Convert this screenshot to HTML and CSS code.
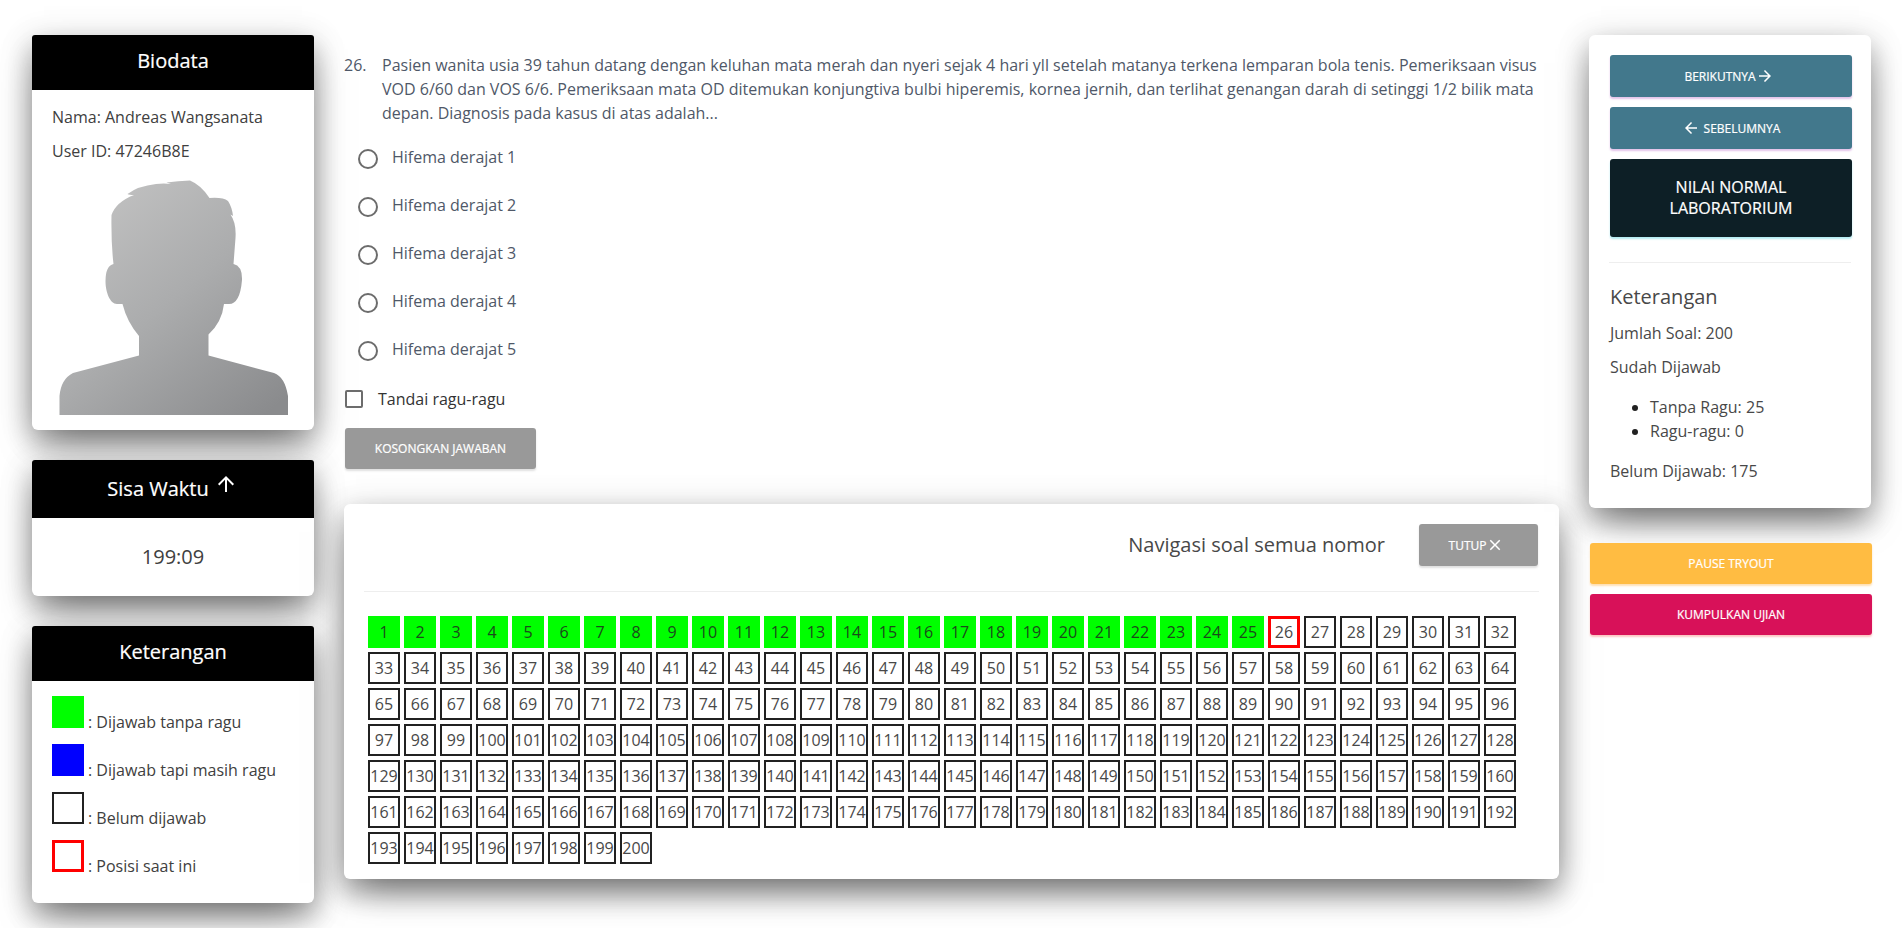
FILE: index.html
```html
<!DOCTYPE html>
<html lang="id">
<head>
<meta charset="utf-8">
<title>Tryout</title>
<link rel="stylesheet" href="styles.css">
</head>
<body>
<div class="layout">
  <aside class="side">
    <section class="card">
      <h2 class="card-head">Biodata</h2>
      <div class="bio">
        <p>Nama: Andreas Wangsanata</p>
        <p>User ID: 47246B8E</p>
        <svg class="avatar" viewBox="0 0 242 242" width="242" height="242">
          <defs>
            <linearGradient id="skin" x1="0.1" y1="0" x2="0.9" y2="1">
              <stop offset="0" stop-color="#c4c4c4"/>
              <stop offset="0.5" stop-color="#abacad"/>
              <stop offset="1" stop-color="#8a8b8d"/>
            </linearGradient>
          </defs>
          <path fill="url(#skin)" d="M7.500 242V223Q9 206 21 200L87 182.500V163Q75 149 70.500 131H65C58 131 53.500 119 53.500 108Q53.500 93 61.500 91Q59 70 59.500 42Q64 29 82 22Q77 22 75.500 21Q86 13 104 11Q112 10 119 11L114.500 9.500Q126 8 138 7.500Q149 12 157.500 25Q171 24 176 28Q180 34 181 43L178.500 41.500Q184.500 50 183.500 65L181.500 91Q190.500 93 190 107Q188 131 177 131H172Q170 149 156.500 161.500V182.500L222 200Q233 204 236 223V242Z"/>
        </svg>
      </div>
    </section>

    <section class="card">
      <h2 class="card-head card-head-timer">Sisa Waktu
        <svg class="up" viewBox="0 0 24 24" width="24" height="24"><path fill="currentColor" d="M4 12l1.410 1.410L11 7.830V20h2V7.830l5.580 5.590L20 12l-8-8-8 8z"/></svg>
      </h2>
      <div class="timer">199:09</div>
    </section>

    <section class="card">
      <h2 class="card-head">Keterangan</h2>
      <ul class="legend">
        <li><span class="cell done"></span><span>: Dijawab tanpa ragu</span></li>
        <li><span class="cell doubt"></span><span>: Dijawab tapi masih ragu</span></li>
        <li><span class="cell"></span><span>: Belum dijawab</span></li>
        <li><span class="cell current"></span><span>: Posisi saat ini</span></li>
      </ul>
    </section>
  </aside>

  <main class="main">
    <div class="question">
      <span class="question-no">26.</span>
      <p class="question-text">Pasien wanita usia 39 tahun datang dengan keluhan mata merah dan nyeri sejak 4 hari yll setelah matanya terkena lemparan bola tenis. Pemeriksaan visus VOD 6/60 dan VOS 6/6. Pemeriksaan mata OD ditemukan konjungtiva bulbi hiperemis, kornea jernih, dan terlihat genangan darah di setinggi 1/2 bilik mata depan. Diagnosis pada kasus di atas adalah...</p>
    </div>
    <ul class="options">
      <li><span class="radio"></span>Hifema derajat 1</li>
      <li><span class="radio"></span>Hifema derajat 2</li>
      <li><span class="radio"></span>Hifema derajat 3</li>
      <li><span class="radio"></span>Hifema derajat 4</li>
      <li><span class="radio"></span>Hifema derajat 5</li>
    </ul>
    <div class="doubt-row"><span class="checkbox"></span>Tandai ragu-ragu</div>
    <button class="btn btn-gray btn-clear">Kosongkan Jawaban</button>

    <section class="card nav-card">
      <header class="nav-head">
        <h3 class="subtitle">Navigasi soal semua nomor</h3>
        <button class="btn btn-gray btn-close">Tutup
          <svg viewBox="0 0 24 24" width="18" height="18"><path fill="currentColor" d="M19 6.410L17.590 5 12 10.590 6.410 5 5 6.410 10.590 12 5 17.590 6.410 19 12 13.410 17.590 19 19 17.590 13.410 12z"/></svg>
        </button>
      </header>
      <div class="numbers" id="numbers"></div>
    </section>
  </main>

  <aside class="right">
    <section class="card panel">
      <div class="panel-buttons">
        <button class="btn btn-teal btn-next">Berikutnya
          <svg viewBox="0 0 24 24" width="18" height="18"><path fill="currentColor" d="M12 4l-1.410 1.410L16.170 11H4v2h12.170l-5.580 5.590L12 20l8-8z"/></svg>
        </button>
        <button class="btn btn-teal btn-prev">
          <svg viewBox="0 0 24 24" width="18" height="18"><path fill="currentColor" d="M20 11H7.830l5.590-5.590L12 4l-8 8 8 8 1.410-1.410L7.830 13H20v-2z"/></svg>
          Sebelumnya</button>
        <button class="btn btn-dark">Nilai Normal<br>Laboratorium</button>
      </div>
      <div class="summary">
        <h3 class="subtitle">Keterangan</h3>
        <p>Jumlah Soal: 200</p>
        <p>Sudah Dijawab</p>
        <ul>
          <li>Tanpa Ragu: 25</li>
          <li>Ragu-ragu: 0</li>
        </ul>
        <p>Belum Dijawab: 175</p>
      </div>
    </section>
    <div class="actions">
      <button class="btn btn-amber">Pause Tryout</button>
      <button class="btn btn-pink">Kumpulkan Ujian</button>
    </div>
  </aside>
</div>
<script src="numbers.js"></script>
</body>
</html>
```
FILE: styles.css
```css
* { box-sizing: border-box; }

html, body { height: 100%; }

body {
  margin: 0;
  overflow: hidden;
  background: #fff;
  color: #404040;
  font: 400 16px/24px "Open Sans", "Noto Sans", sans-serif;
}

h2, h3, p, ul { margin: 0; padding: 0; }
ul { list-style: none; }

.layout {
  display: grid;
  grid-template-columns: 282px 1215px 283px;
  column-gap: 30px;
  padding: 35px 30px 0 32px;
  align-items: start;
}

.side { display: grid; gap: 30px; }

.card {
  background: #fff;
  border-radius: 6px;
  box-shadow: 0 16px 24px 2px rgba(0, 0, 0, .14), 0 6px 30px 5px rgba(0, 0, 0, .12), 0 16px 38px -12px rgba(0, 0, 0, .56);
}

.card-head {
  display: flex;
  justify-content: center;
  height: 55px;
  padding-top: 12px;
  border-radius: 3px 3px 0 0;
  background: #000;
  color: #fff;
  font-size: 20px;
  font-weight: 400;
  line-height: 28px;
  -webkit-text-stroke: .2px currentColor;
}

.card-head-timer { height: 58px; padding-top: 15px; gap: 6px; }
.up { margin: -3px 1px 0 -1px; }

.bio { height: 340px; padding: 15px 20px 0; }
.bio p { margin-bottom: 10px; }
.avatar { display: block; }

.timer { height: 78px; padding-top: 25px; text-align: center; font-size: 20px; line-height: 28px; }

.legend { height: 222px; padding: 15px 20px 0; }
.legend li { display: flex; gap: 4px; height: 48px; }
.legend li span + span { padding-top: 14px; }

.cell {
  flex: none;
  width: 32px;
  height: 32px;
  border: 2px solid #212121;
  text-align: center;
  line-height: 28px;
}
.done { background: #0f0; border-color: #0f0; }
.doubt { background: #00f; border-color: #00f; }
.current { border: 3px solid #f00; line-height: 26px; }

.main { padding-top: 18px; }

.question { display: flex; color: #4f5868; }
.question-no { width: 38px; flex: none; }
.question-text { width: 1160px; }

.options { padding: 8px 0 0 14px; color: #4f5868; }
.options li { display: flex; height: 48px; padding-top: 12px; }

.radio {
  width: 20px;
  height: 20px;
  margin: 4px 14px 0 0;
  border: 2px solid #6c6c6c;
  border-radius: 50%;
}

.doubt-row { display: flex; height: 48px; padding: 14px 0 0 1px; color: #333; }
.checkbox {
  width: 18px;
  height: 18px;
  margin: 3px 15px 0 0;
  border: 2px solid #6c6c6c;
  border-radius: 2px;
}

.btn {
  display: flex;
  align-items: center;
  justify-content: center;
  height: 41px;
  padding: 0;
  border: 0;
  border-radius: 3px;
  color: #fff;
  font: 400 12px/17px "Open Sans", "Noto Sans", sans-serif;
  text-transform: uppercase;
  -webkit-text-stroke: .2px currentColor;
}

.btn-gray { background: #999; box-shadow: 0 2px 2px rgba(153, 153, 153, .3); }
.btn-teal { height: 42px; background: #42788c; box-shadow: 0 2px 2px rgba(156, 39, 176, .28); }
.btn-dark { height: 78px; background: #0d1f26; box-shadow: 0 2px 2px rgba(0, 188, 212, .3); font-size: 16px; line-height: 21px; }
.btn-amber { background: #ffbc42; box-shadow: 0 2px 2px rgba(255, 152, 0, .3); }
.btn-pink { background: #d81159; box-shadow: 0 2px 2px rgba(244, 67, 54, .3); }

.btn-clear { width: 191px; margin: 7px 0 0 1px; }

.nav-card { height: 375px; margin-top: 35px; padding: 20px 20px 0; color: #484848; }
.nav-head {
  display: flex;
  justify-content: flex-end;
  height: 68px;
  padding-right: 1px;
  border-bottom: 1px solid #eee;
}
.nav-head .subtitle { padding-top: 7px; }
.btn-close { width: 119px; height: 42px; margin-left: 34px; padding-right: 4px; }
.subtitle { font-size: 20px; font-weight: 400; line-height: 28px; }

.numbers {
  display: grid;
  grid-template-columns: repeat(32, 32px);
  gap: 4px;
  padding: 24px 0 0 4px;
}
.numbers .done { color: #1b4a1b; }

.panel { width: 282px; height: 473px; padding: 20px; color: #484848; }
.panel-buttons {
  display: grid;
  gap: 10px;
  height: 208px;
  align-content: start;
  border-bottom: 1px solid #eee;
}
.panel-buttons .btn { width: 242px; margin-left: 1px; }
.btn-next { padding-right: 4px; }
.btn-prev { gap: 4px; padding-left: 0; }

.summary { padding: 20px 0 0 1px; }
.summary .subtitle { margin-bottom: 10px; }
.summary p { margin-bottom: 10px; }
.summary ul { margin: 16px 0; padding-left: 40px; list-style: disc; }
.summary li::marker { color: #212121; }

.actions { display: grid; gap: 10px; padding: 35px 0 0 1px; }
```
FILE: numbers.js
```js
const grid = document.getElementById('numbers');
for (let n = 1; n <= 200; n++) {
  const cell = document.createElement('span');
  cell.className = 'cell' + (n <= 25 ? ' done' : n === 26 ? ' current' : '');
  cell.textContent = n;
  grid.appendChild(cell);
}
```
